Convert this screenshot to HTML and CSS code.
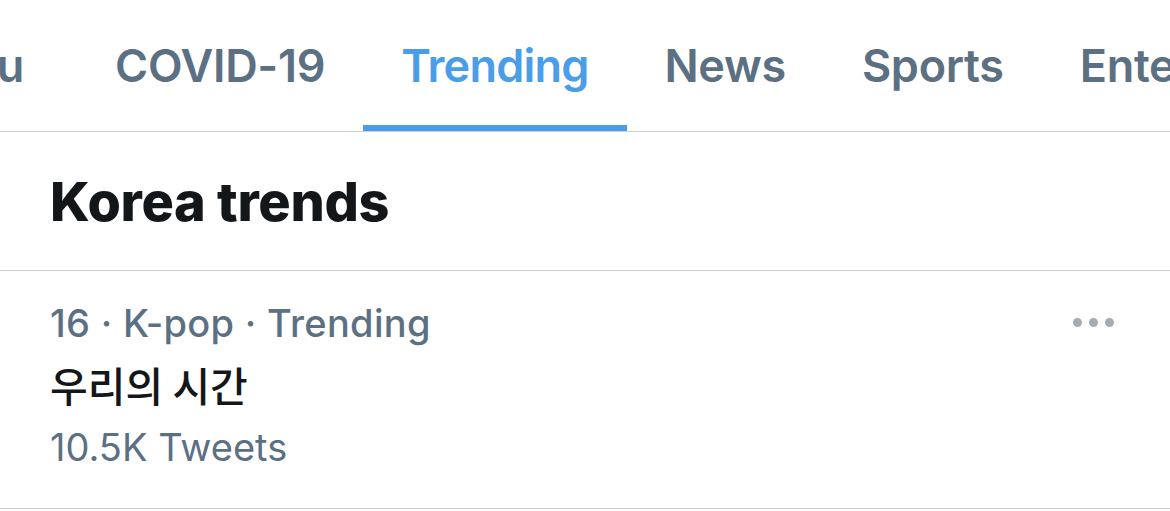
FILE: index.html
```html
<!DOCTYPE html>
<html lang="en">
<head>
<meta charset="utf-8">
<title>Explore</title>
<link rel="stylesheet" href="styles.css">
</head>
<body>
<div class="page">
  <nav class="tabs">
    <div class="tab tab-first">For you</div>
    <div class="tab">COVID-19</div>
    <div class="tab active">Trending</div>
    <div class="tab">News</div>
    <div class="tab">Sports</div>
    <div class="tab">Entertainment</div>
  </nav>
  <section class="section-head">
    <h1 class="title">Korea trends</h1>
  </section>
  <article class="trend">
    <div class="trend-body">
      <div class="meta">16 · K-pop · Trending</div>
      <div class="topic">우리의 시간</div>
      <div class="count">10.5K Tweets</div>
    </div>
    <div class="more" aria-label="More">
      <span class="dot"></span><span class="dot"></span><span class="dot"></span>
    </div>
  </article>
</div>
</body>
</html>
```
FILE: styles.css
```css
* { box-sizing: border-box; }
html, body { margin: 0; padding: 0; background: #ffffff; }
body { font-family: Inter, "Liberation Sans", "Noto Sans CJK KR", sans-serif; }
.page { width: 1170px; height: 511px; overflow: hidden; }

.tabs {
  display: flex;
  height: 132px;
  border-bottom: 1px solid #cfd3d6;
  white-space: nowrap;
  overflow: hidden;
}
.tab {
  flex: 0 0 auto;
  display: flex;
  align-items: center;
  padding: 6px 38px 0;
  height: 131px;
  font-size: 45px;
  font-weight: 600;
  color: #5b7083;
  border-bottom: 6px solid transparent;
  letter-spacing: -0.3px;
}
.tab-first { margin-left: -174px; padding-right: 53px; }
.tab.active { color: #4a9de9; border-bottom-color: #4a9de9; letter-spacing: -0.8px; }

.section-head {
  height: 139px;
  border-bottom: 1px solid #cfd3d6;
  display: flex;
  align-items: center;
  padding-left: 50px;
}
.title {
  margin: 0;
  font-size: 54px;
  font-weight: 800;
  color: #14171a;
  letter-spacing: -0.3px;
}

.trend {
  display: flex;
  justify-content: space-between;
  height: 238px;
  border-bottom: 1px solid #cfd3d6;
  padding: 28px 56px 0 50px;
}
.meta {
  font-size: 38px;
  font-weight: 500;
  color: #5b7083;
  line-height: 48px;
  letter-spacing: 0.3px;
}
.topic {
  font-family: "Noto Sans CJK KR", sans-serif;
  font-size: 41px;
  font-weight: 500;
  color: #14171a;
  line-height: 60px;
  margin-top: 7px;
}
.count {
  font-size: 38px;
  font-weight: 400;
  color: #5b7083;
  line-height: 60px;
  margin-top: 3px;
}
.more {
  display: flex;
  gap: 7px;
  padding-top: 19px;
}
.dot {
  width: 9px;
  height: 9px;
  border-radius: 50%;
  background: #a3acb5;
}
```
